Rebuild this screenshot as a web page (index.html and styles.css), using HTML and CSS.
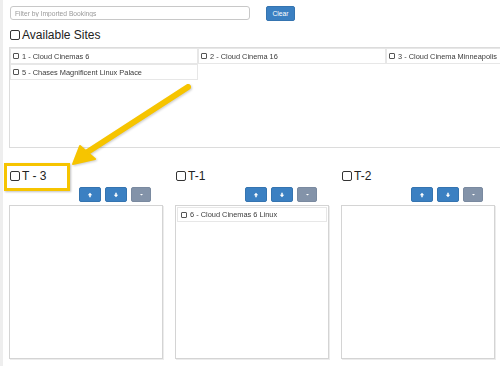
FILE: index.html
```html
<!DOCTYPE html>
<html lang="en">
<head>
  <meta charset="UTF-8" />
  <title>Site Groups</title>
  <link rel="stylesheet" href="styles.css">
</head>
<body>
<div class="page">
  <!-- filter row -->
  <div class="filter-row">
    <input class="filter-input" type="text" placeholder="Filter by Imported Bookings">
    <button class="btn btn-primary clear-btn">Clear</button>
  </div>

  <div class="group-title"><span class="check"></span>Available Sites</div>
  <div class="sites-box">
    <div class="site-cell"><span class="check-sm"></span>1 - Cloud Cinemas 6</div>
    <div class="site-cell"><span class="check-sm"></span>2 - Cloud Cinema 16</div>
    <div class="site-cell"><span class="check-sm"></span>3 - Cloud Cinema Minneapolis</div>
    <div class="site-cell"><span class="check-sm"></span>5 - Chases Magnificent Linux Palace</div>
  </div>

  <!-- groups -->
  <div class="groups">
    <div class="group">
      <div class="group-title"><span class="check"></span>T - 3</div>
      <div class="btn-row">
        <button class="btn btn-primary btn-xs"><svg viewBox="0 0 8 8" width="6" height="6"><path d="M4 1 L7 4.2 H5 V7 H3 V4.2 H1 Z" fill="#fff"/></svg></button>
        <button class="btn btn-primary btn-xs"><svg viewBox="0 0 8 8" width="6" height="6"><path d="M4 7 L7 3.8 H5 V1 H3 V3.8 H1 Z" fill="#fff"/></svg></button>
        <button class="btn btn-muted btn-xs narrow"><svg viewBox="0 0 8 8" width="5" height="5"><path d="M1.5 3 H6.5 L4 5.5 Z" fill="#fff"/></svg></button>
      </div>
      <div class="group-box"></div>
    </div>
    <div class="group">
      <div class="group-title"><span class="check"></span>T-1</div>
      <div class="btn-row">
        <button class="btn btn-primary btn-xs"><svg viewBox="0 0 8 8" width="6" height="6"><path d="M4 1 L7 4.2 H5 V7 H3 V4.2 H1 Z" fill="#fff"/></svg></button>
        <button class="btn btn-primary btn-xs"><svg viewBox="0 0 8 8" width="6" height="6"><path d="M4 7 L7 3.8 H5 V1 H3 V3.8 H1 Z" fill="#fff"/></svg></button>
        <button class="btn btn-muted btn-xs narrow"><svg viewBox="0 0 8 8" width="5" height="5"><path d="M1.5 3 H6.5 L4 5.5 Z" fill="#fff"/></svg></button>
      </div>
      <div class="group-box">
        <div class="site-cell"><span class="check-sm"></span>6 - Cloud Cinemas 6 Linux</div>
      </div>
    </div>
    <div class="group">
      <div class="group-title"><span class="check"></span>T-2</div>
      <div class="btn-row">
        <button class="btn btn-primary btn-xs"><svg viewBox="0 0 8 8" width="6" height="6"><path d="M4 1 L7 4.2 H5 V7 H3 V4.2 H1 Z" fill="#fff"/></svg></button>
        <button class="btn btn-primary btn-xs"><svg viewBox="0 0 8 8" width="6" height="6"><path d="M4 7 L7 3.8 H5 V1 H3 V3.8 H1 Z" fill="#fff"/></svg></button>
        <button class="btn btn-muted btn-xs narrow"><svg viewBox="0 0 8 8" width="5" height="5"><path d="M1.5 3 H6.5 L4 5.5 Z" fill="#fff"/></svg></button>
      </div>
      <div class="group-box"></div>
    </div>
  </div>

  <!-- annotation overlay -->
  <div class="highlight"></div>
  <svg class="arrow" width="500" height="366" viewBox="0 0 500 366">
    <g fill="#f6c400" stroke="#f6c400" stroke-linecap="round" stroke-linejoin="round">
      <line x1="188" y1="87" x2="86" y2="153" stroke-width="6"/>
      <polygon points="73,164 80,146 95,159" stroke-width="2"/>
    </g>
  </svg>
</div>
</body>
</html>
```

FILE: styles.css
```css
body {
  margin: 0;
  font-family: "Liberation Sans", Arial, sans-serif;
  background: #fff;
  color: #333;
}
.page {
  position: relative;
  border-left: 3px solid #eeeeee;
  min-height: 366px;
  box-sizing: border-box;
  padding: 6px 0 0 7px;
  overflow: hidden;
}
.filter-row {
  display: flex;
  align-items: flex-start;
  height: 15px;
}
.filter-input {
  width: 240px;
  height: 14px;
  box-sizing: border-box;
  border: 1px solid #c8c8c8;
  border-radius: 3px;
  padding: 0 4px;
  font-family: inherit;
  font-size: 6.7px;
  margin: 0;
  filter: grayscale(1);
}
.filter-input::placeholder {
  color: #999;
}
.btn {
  border: none;
  border-radius: 2px;
  color: #fff;
  font-family: inherit;
  padding: 0;
  margin: 0;
  display: flex;
  align-items: center;
  justify-content: center;
}
.btn-primary {
  background: #3b80c2;
  border: 1px solid #3574b0;
}
.btn-muted {
  background: #8393a9;
  border: 1px solid #7a8aa0;
}
.clear-btn {
  margin-left: 16px;
  width: 29px;
  height: 15px;
  font-size: 6.7px;
}
.group-title {
  display: flex;
  align-items: center;
  height: 14px;
  font-size: 12px;
  margin-top: 7px;
  color: #222;
}
.check {
  display: inline-block;
  width: 8px;
  height: 8px;
  border: 1.2px solid #333;
  border-radius: 2px;
  margin-right: 2px;
}
.check-sm {
  display: inline-block;
  width: 4px;
  height: 4px;
  border: 1px solid #555;
  border-radius: 1px;
  margin-right: 3px;
}
.sites-box {
  margin: 5px 0 0 -1px;
  width: 510px;
  height: 101px;
  box-sizing: border-box;
  border: 1px solid #dcdcdc;
  display: grid;
  grid-template-columns: repeat(3, 188px);
  grid-auto-rows: 16px;
  align-content: start;
  overflow: hidden;
}
.site-cell {
  display: flex;
  align-items: center;
  box-sizing: border-box;
  height: 16px;
  padding-left: 2px;
  border: 1px solid #e0e8f0;
  background: #fff;
  font-size: 7.4px;
  color: #3a3a3a;
  white-space: nowrap;
  filter: grayscale(1);
}
.groups {
  display: flex;
  gap: 12px;
  margin-left: -1px;
  margin-top: 7px;
}
.group {
  width: 154px;
}
.group .group-title {
  margin-top: 14px;
  margin-left: 1px;
}
.btn-row {
  display: flex;
  justify-content: flex-end;
  gap: 4px;
  padding-right: 12px;
  margin-top: 4px;
}
.btn-xs {
  width: 22px;
  height: 15px;
  box-sizing: border-box;
}
.btn-xs.narrow {
  width: 20px;
}
.group-box {
  margin-top: 3px;
  height: 154px;
  box-sizing: border-box;
  border: 1px solid #d4d4d4;
  box-shadow: 1px 1px 0 #ececec;
  padding: 1px;
}
.group-box .site-cell {
  height: 15px;
  padding-left: 3px;
}
.highlight {
  position: absolute;
  left: 1px;
  top: 163px;
  width: 66px;
  height: 28px;
  box-sizing: border-box;
  border: 3px solid #f6c400;
  box-shadow: 1px 1px 2px rgba(0, 0, 0, 0.25);
}
.arrow {
  position: absolute;
  left: -3px;
  top: 0;
  filter: drop-shadow(1px 1px 1px rgba(0, 0, 0, 0.2));
}
```
